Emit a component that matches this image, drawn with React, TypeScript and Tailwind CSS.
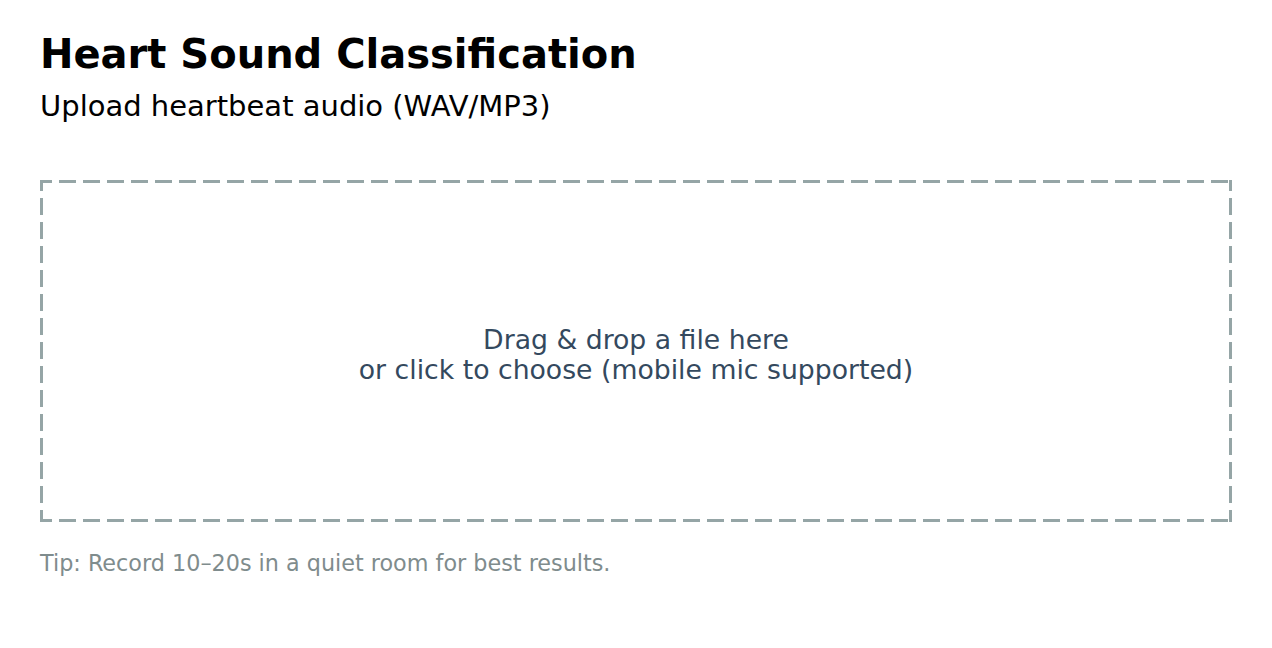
export default function App() {
  return (
    <div className="min-h-screen bg-white px-10 pt-[30px] font-['DejaVu_Sans',sans-serif]">
      <h1 className="text-[40px] font-bold leading-[48px] text-black">Heart Sound Classification</h1>
      <p className="mt-[10px] text-[29px] leading-[36px] text-black">Upload heartbeat audio (WAV/MP3)</p>
      {/* dashed drop zone, dashes drawn with gradients so they come out long like the original */}
      <div className="mt-[56px] flex h-[342px] cursor-pointer flex-col items-center justify-center pt-[7px] text-center text-[26.7px] leading-[30px] text-[#34495e] [background:linear-gradient(90deg,#95a5a6_17px,transparent_17px)_-5px_0/24px_3px_repeat-x,linear-gradient(90deg,#95a5a6_17px,transparent_17px)_-5px_100%/24px_3px_repeat-x,linear-gradient(#95a5a6_17px,transparent_17px)_0_-6px/3px_24px_repeat-y,linear-gradient(#95a5a6_17px,transparent_17px)_100%_-6px/3px_24px_repeat-y]">
        <div>Drag &amp; drop a file here</div>
        <div>or click to choose (mobile mic supported)</div>
      </div>
      <p className="mt-[28px] text-[22.3px] leading-[26px] text-[#7f8c8d]">
        Tip: Record 10–20s in a quiet room for best results.
      </p>
    </div>
  );
}
